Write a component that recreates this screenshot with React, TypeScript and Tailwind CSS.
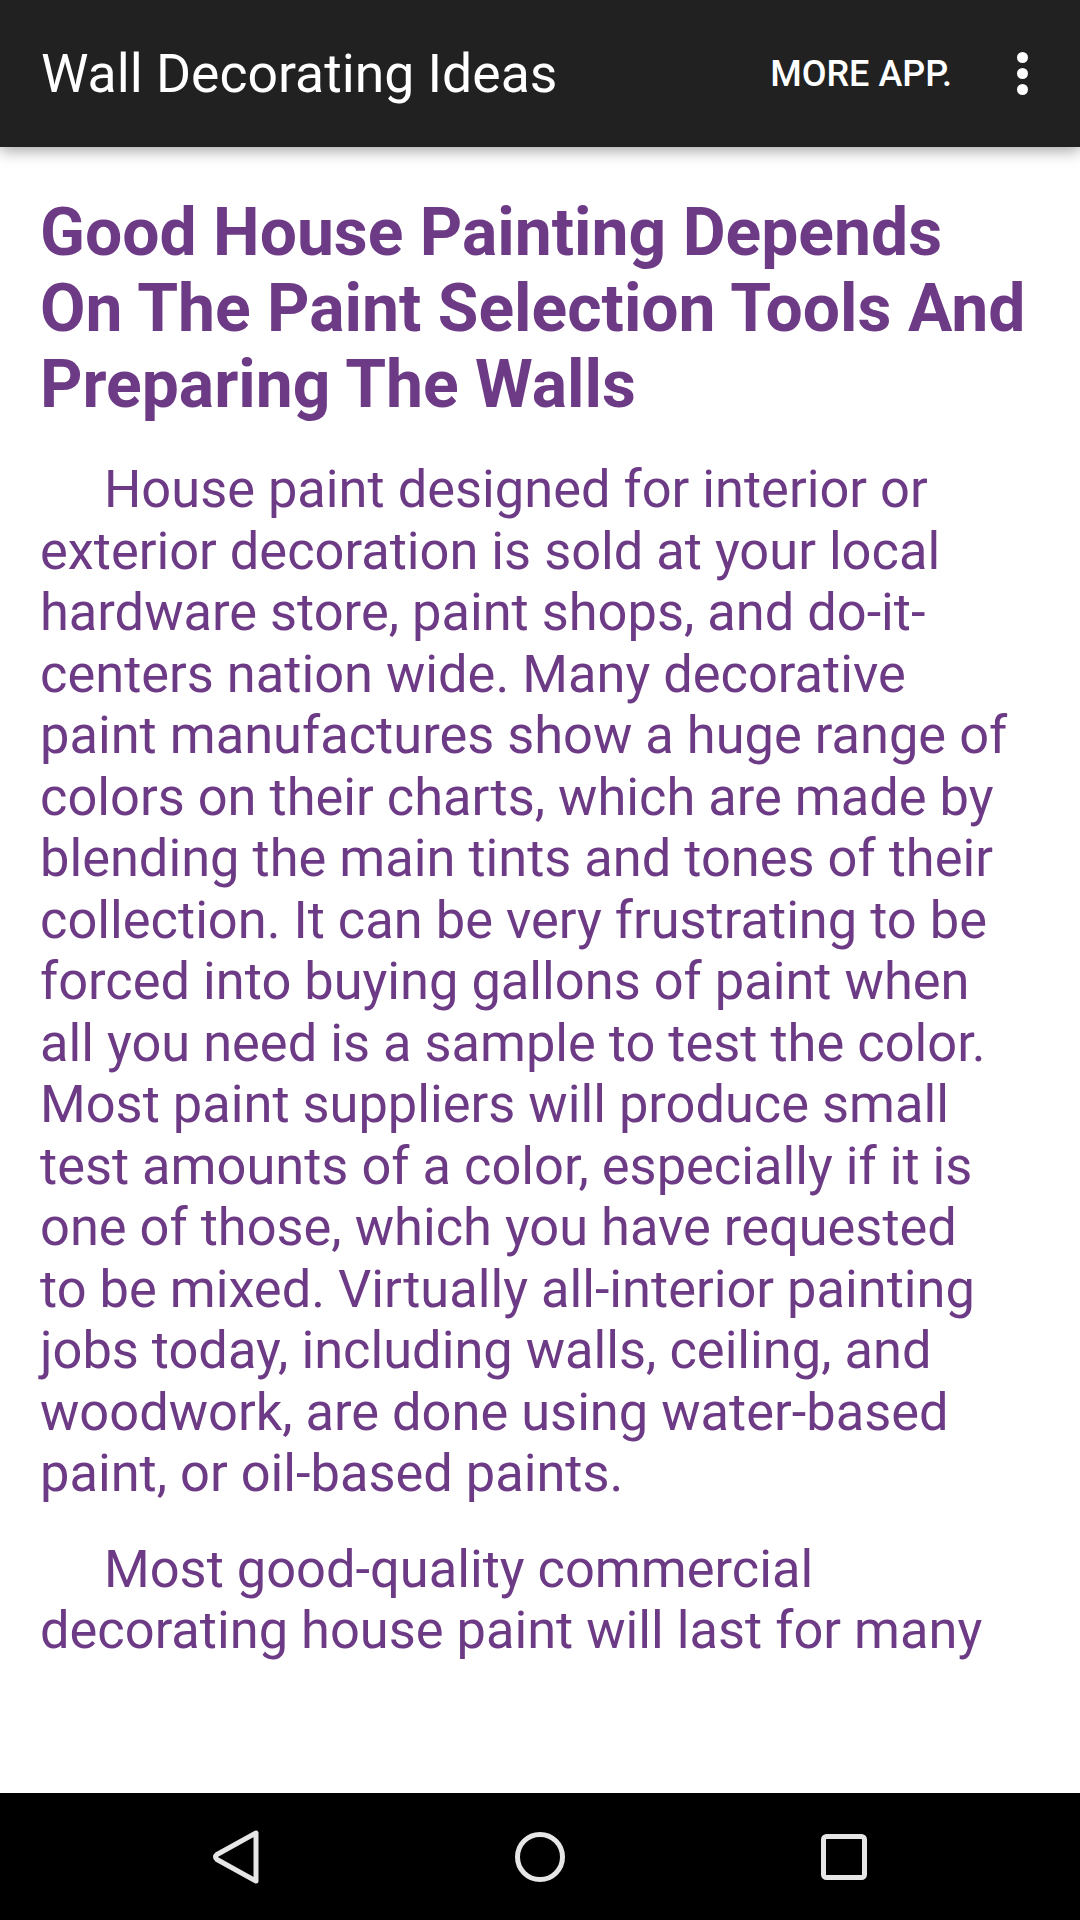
import React from "react";

const PURPLE = "text-[#6d3a86]";

const paragraphs = [
  "House paint designed for interior or exterior decoration is sold at your local hardware store, paint shops, and do-it-centers nation wide. Many decorative paint manufactures show a huge range of colors on their charts, which are made by blending the main tints and tones of their collection. It can be very frustrating to be forced into buying gallons of paint when all you need is a sample to test the color. Most paint suppliers will produce small test amounts of a color, especially if it is one of those, which you have requested to be mixed. Virtually all-interior painting jobs today, including walls, ceiling, and woodwork, are done using water-based paint, or oil-based paints.",
  "Most good-quality commercial decorating house paint will last for many",
];

function NavBar() {
  return (
    <div className="h-[127px] bg-black flex items-center justify-center shrink-0">
      <div className="w-[304px] flex justify-center">
        {/* back */}
        <svg width="50" height="54" viewBox="0 0 50 54" fill="none">
          <path
            d="M45 3 L45 51 L6 29.5 Q3 27 6 24.5 Z"
            stroke="#e6e6e6"
            strokeWidth="5"
            strokeLinejoin="round"
          />
        </svg>
      </div>
      <div className="w-[304px] flex justify-center">
        {/* home */}
        <svg width="54" height="54" viewBox="0 0 54 54" fill="none">
          <circle cx="27" cy="27" r="22.5" stroke="#e6e6e6" strokeWidth="5" />
        </svg>
      </div>
      <div className="w-[304px] flex justify-center">
        {/* recents */}
        <svg width="46" height="46" viewBox="0 0 46 46" fill="none">
          <rect x="2.5" y="2.5" width="41" height="41" rx="3" stroke="#e6e6e6" strokeWidth="5" />
        </svg>
      </div>
    </div>
  );
}

export default function App() {
  return (
    <div className="w-[1080px] h-[1920px] flex flex-col bg-white overflow-hidden font-['Roboto',sans-serif]">
      {/* Toolbar */}
      <div className="relative z-10 h-[147px] bg-[#212121] flex items-center pl-[41px] pr-[46px] shadow-[0_4px_14px_rgba(0,0,0,0.35)] shrink-0">
        <h1 className="flex-1 text-white text-[53.5px] leading-none">
          Wall Decorating Ideas
        </h1>
        <span className="text-white text-[36px] font-medium leading-none mr-[58px]">
          MORE APP.
        </span>
        <div className="flex flex-col gap-[5px] items-center w-[24px]">
          <span className="w-[11px] h-[11px] rounded-full bg-white" />
          <span className="w-[11px] h-[11px] rounded-full bg-white" />
          <span className="w-[11px] h-[11px] rounded-full bg-white" />
        </div>
      </div>

      {/* Content */}
      <div className="flex-1 overflow-hidden pt-[48px] pl-[40px] pr-[50px]">
        <h2 className={`${PURPLE} text-[66px] font-bold leading-[76px]`}>
          Good House Painting Depends On The Paint Selection Tools And Preparing The Walls
        </h2>
        <div className="mt-[36px] pr-[16px] flex flex-col gap-[34px]">
          {paragraphs.map((p, i) => (
            <p
              key={i}
              className={`${PURPLE} text-[52.4px] leading-[61.5px] indent-[64px]`}
            >
              {p}
            </p>
          ))}
        </div>
      </div>

      <NavBar />
    </div>
  );
}
